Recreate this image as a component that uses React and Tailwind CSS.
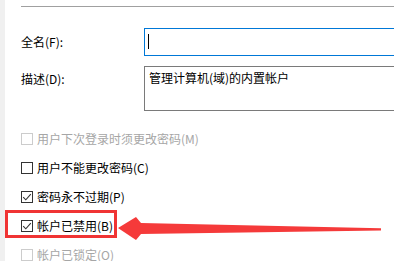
import React from "react";

const font = { fontFamily: '"Noto Sans CJK SC", "Noto Sans", sans-serif' };

function Check({ checked, disabled, label }) {
  return (
    <div className="flex h-[29px] items-center">
      <div
        className={
          "flex h-[12px] w-[12px] shrink-0 items-center justify-center border bg-white " +
          (disabled ? "border-[#cccccc]" : "border-[#333333]")
        }
      >
        {checked && (
          <svg width="10" height="10" viewBox="0 0 10 10">
            <path d="M1.2 5.2 L3.8 7.8 L8.8 2.2" fill="none" stroke="#333" strokeWidth="1.1" />
          </svg>
        )}
      </div>
      <span
        className={
          "ml-[4px] text-[12px] leading-[16px] " +
          (disabled ? "text-[#a6a6a6]" : "text-[#000000]")
        }
      >
        {label}
      </span>
    </div>
  );
}

export default function App() {
  return (
    <div className="relative flex h-[261px] w-[394px] overflow-hidden bg-white" style={font}>
      <div className="w-[5px] shrink-0 bg-[#f0f0f0]" />
      <div className="flex-1 pl-[16px]">
        <div className="mt-[6px] h-px bg-[#a0a0a0]" />
        <div className="mt-[21px] grid grid-cols-[123px_1fr] items-center">
          <span className="text-[12px] leading-[16px] text-black">全名(F):</span>
          <div className="relative -mr-[4px] h-[28px] border border-[#0078d7] bg-white">
            <div className="absolute left-[3px] top-[5px] h-[15px] w-px bg-black" />
          </div>
        </div>
        <div className="mt-[10px] grid grid-cols-[123px_1fr] items-start">
          <span className="mt-[5px] text-[12px] leading-[16px] text-black">描述(D):</span>
          <div className="-mr-[4px] h-[45px] border border-[#7a7a7a] bg-white pl-[4px] pt-[3px] text-[12px] leading-[16px] text-black">
            管理计算机(域)的内置帐户
          </div>
        </div>
        <div className="mt-[13px] flex flex-col">
          <Check disabled label="用户下次登录时须更改密码(M)" />
          <Check label="用户不能更改密码(C)" />
          <Check checked label="密码永不过期(P)" />
          <Check checked label="帐户已禁用(B)" />
          <Check disabled label="帐户已锁定(O)" />
        </div>
      </div>
      <div className="pointer-events-none absolute left-[5px] top-[210px] h-[28px] w-[112px] border-[3px] border-[#f03434]" />
      <svg className="pointer-events-none absolute left-0 top-0" width="394" height="261">
        <polygon
          points="118,228 136,217 141,223 381,228.3 381,230.5 141,234 136,240"
          fill="#f53a3a"
        />
      </svg>
    </div>
  );
}
